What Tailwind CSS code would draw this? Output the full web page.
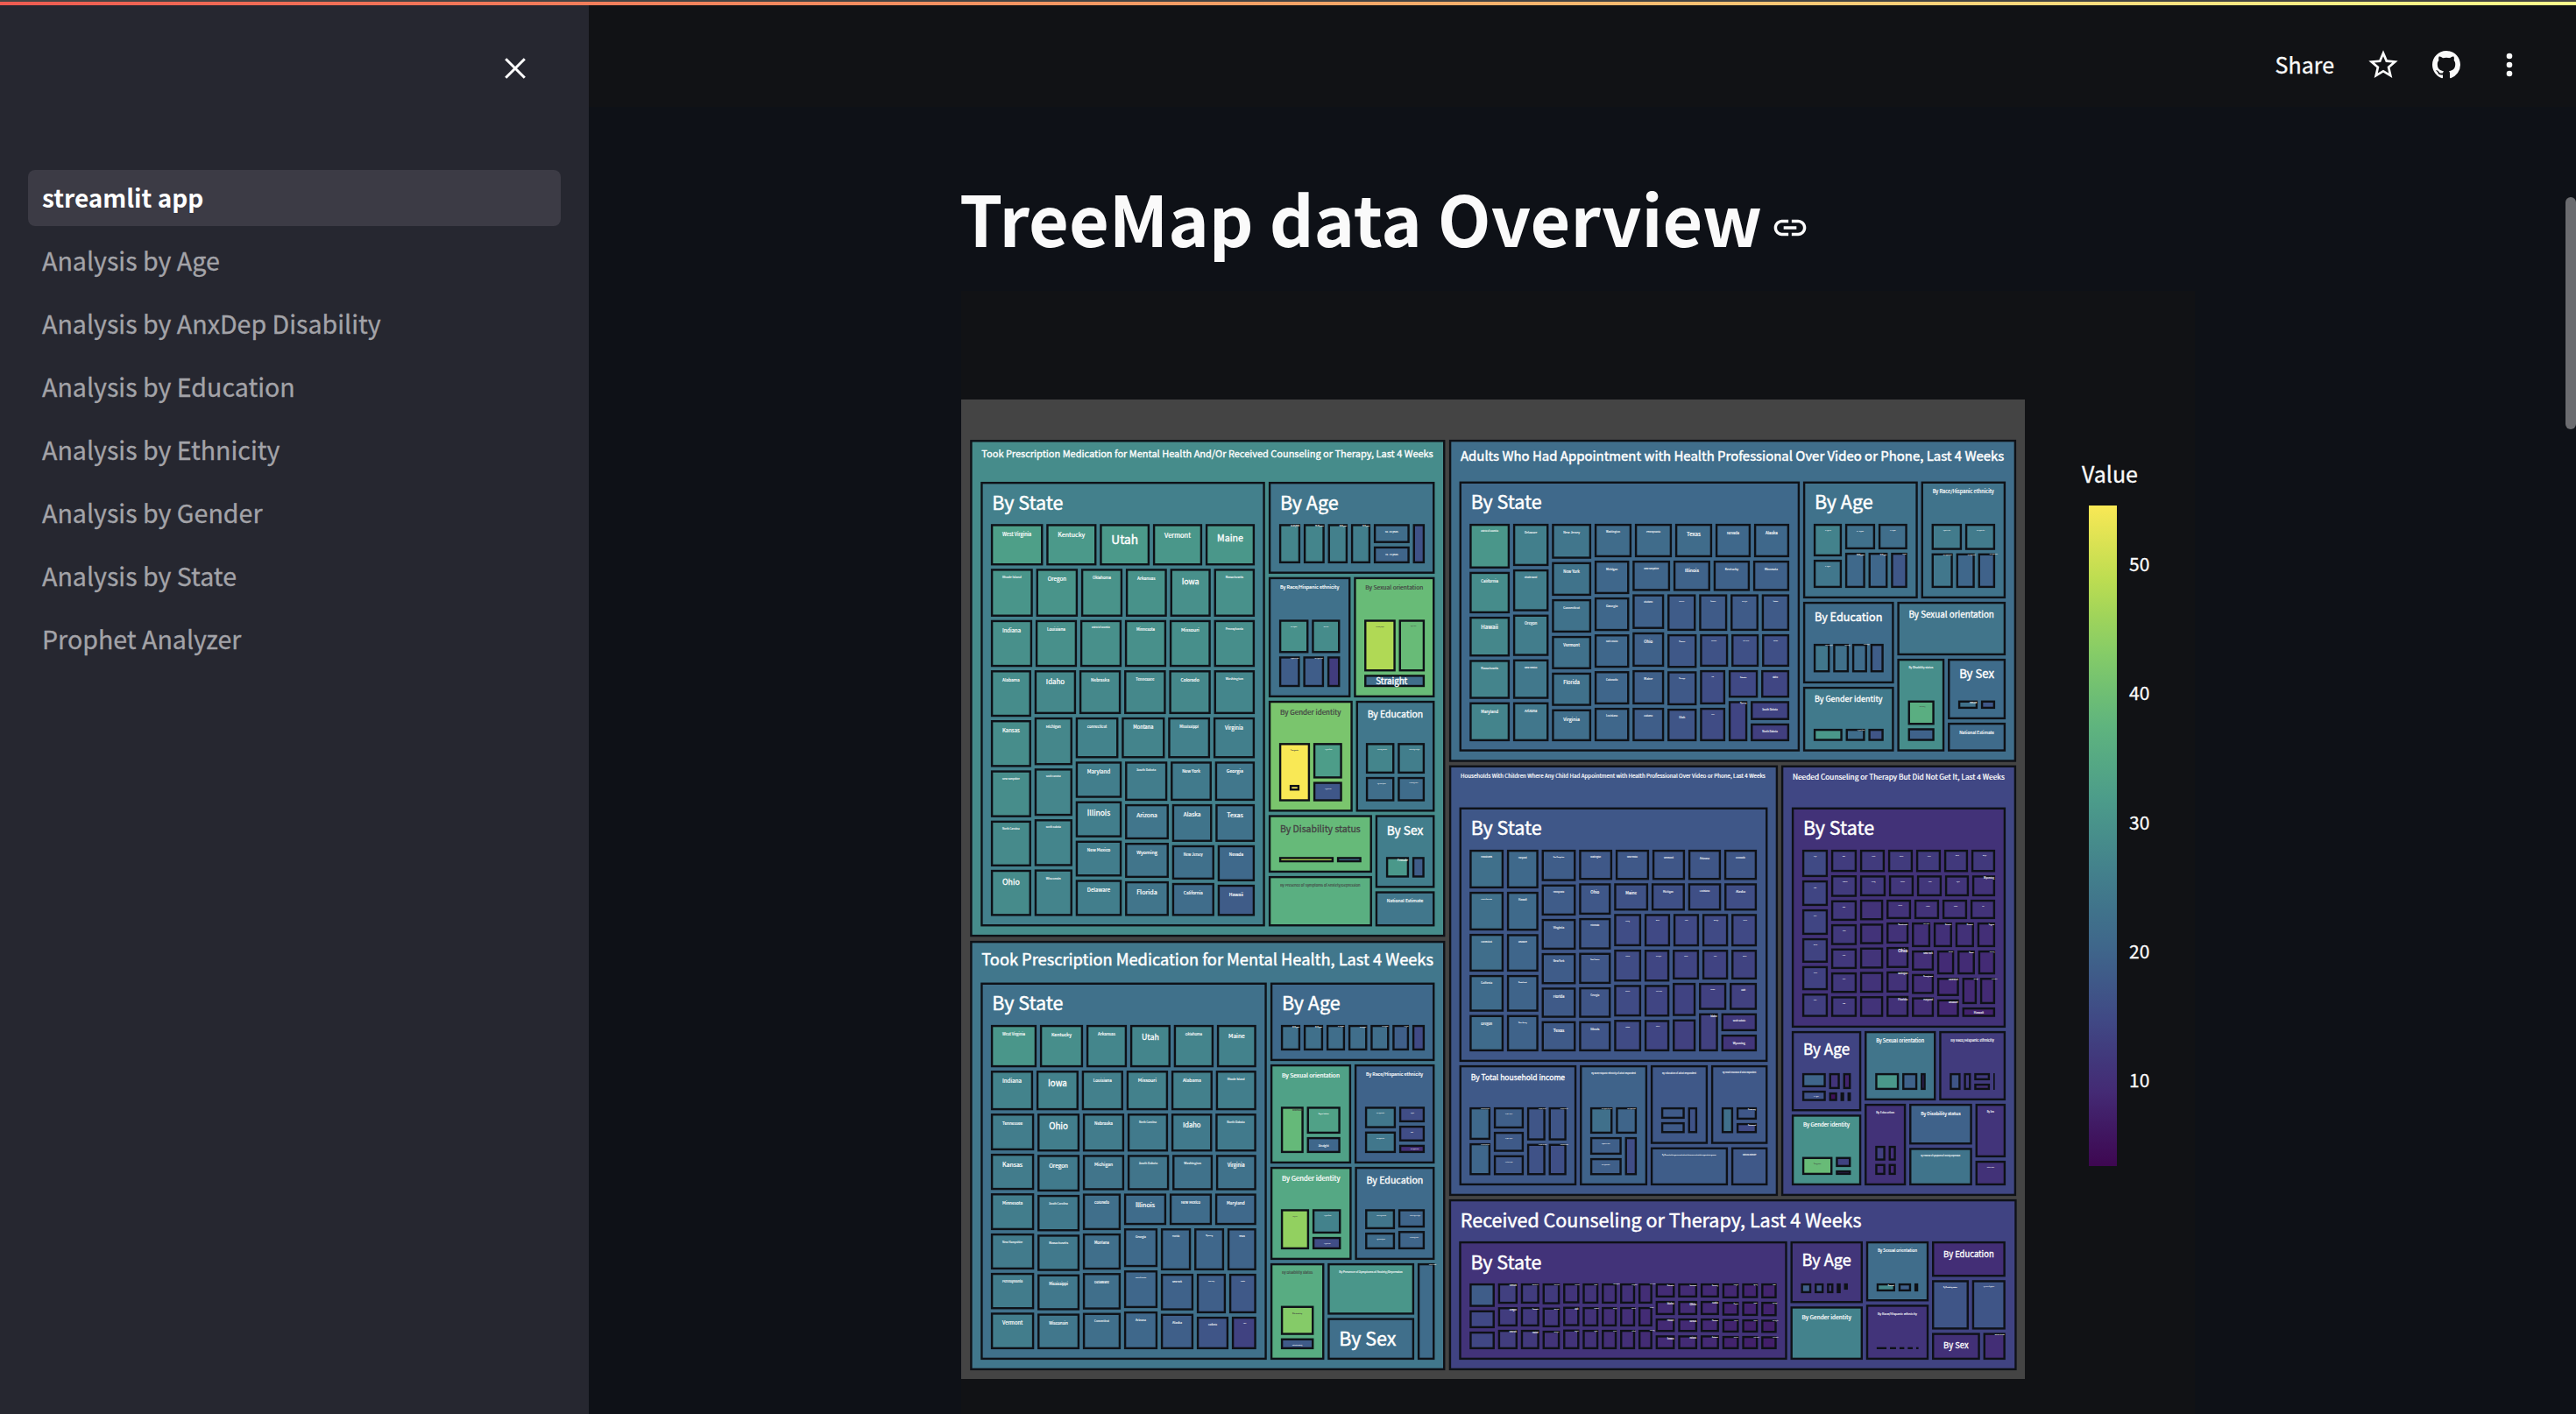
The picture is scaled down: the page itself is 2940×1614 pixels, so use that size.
<!DOCTYPE html>
<html lang="en">
<head>
<meta charset="utf-8">
<title>streamlit app</title>
<script src="https://cdn.jsdelivr.net/npm/@tailwindcss/browser@4"></script>
</head>
<body class="bg-[#0e1117] text-[#fafafa] w-[2940px] h-[1614px] overflow-hidden font-['Noto_Sans_CJK_SC','Noto_Sans',sans-serif]">
<div class="relative flex flex-col w-full h-full">
  <div class="h-[2px] shrink-0 bg-[#444444]"></div>
  <div class="h-1 shrink-0 bg-linear-to-r from-[#ed5b51] via-[#f6a266] to-[#feff8c]"></div>
  <div class="flex flex-1 min-h-0">
    <aside class="w-[672px] shrink-0 bg-[#262730] flex flex-col">
      <div class="h-[188px] pt-[58px] pl-[574px]">
        <svg class="w-7 h-7" viewBox="0 0 28 28" fill="none" stroke="#fff" stroke-width="3"><path d="M3.2 3.2 24.8 24.8M24.8 3.2 3.2 24.8"/></svg>
      </div>
      <nav class="flex flex-col gap-2 px-8 text-[28.6px] leading-[62px] text-[#a3a3a8] [-webkit-text-stroke:0.3px]">
        <a class="h-16 px-4 rounded-lg bg-[#3c3b45] text-white text-[28px] font-bold [-webkit-text-stroke:0px]">streamlit app</a>
        <a class="h-16 px-4">Analysis by Age</a>
        <a class="h-16 px-4">Analysis by AnxDep Disability</a>
        <a class="h-16 px-4">Analysis by Education</a>
        <a class="h-16 px-4">Analysis by Ethnicity</a>
        <a class="h-16 px-4">Analysis by Gender</a>
        <a class="h-16 px-4">Analysis by State</a>
        <a class="h-16 px-4">Prophet Analyzer</a>
      </nav>
    </aside>
    <main class="flex-1 flex flex-col">
      <header class="h-[116px] shrink-0 bg-[#111215] flex items-start justify-end pr-[60px]">
        <span class="text-[25px] leading-9 mt-[49px] mr-[36px] [-webkit-text-stroke:0.3px]">Share</span>
        <svg class="w-10 h-10 mt-[48px] mr-[36px]" viewBox="0 0 24 24" fill="#fafafa"><path d="M22 9.24l-7.19-.62L12 2 9.19 8.63 2 9.24l5.46 4.73L5.82 21 12 17.27 18.18 21l-1.63-7.03L22 9.24zM12 15.4l-3.76 2.27 1-4.28-3.32-2.88 4.38-.38L12 6.1l1.71 4.04 4.38.38-3.32 2.88 1 4.28L12 15.4z"/></svg>
        <svg class="w-8 h-8 mt-[52px] mr-[40px]" viewBox="0 0 16 16" fill="#fafafa"><path d="M8 0C3.58 0 0 3.58 0 8c0 3.54 2.29 6.53 5.47 7.59.4.07.55-.17.55-.38 0-.19-.01-.82-.01-1.49-2.01.37-2.53-.49-2.69-.94-.09-.23-.48-.94-.82-1.13-.28-.15-.68-.52-.01-.53.63-.01 1.08.58 1.23.82.72 1.21 1.87.87 2.33.66.07-.52.28-.87.51-1.07-1.78-.2-3.64-.89-3.64-3.95 0-.87.31-1.59.82-2.15-.08-.2-.36-1.02.08-2.12 0 0 .67-.21 2.2.82.64-.18 1.32-.27 2-.27s1.36.09 2 .27c1.53-1.04 2.2-.82 2.2-.82.44 1.1.16 1.92.08 2.12.51.56.82 1.27.82 2.15 0 3.07-1.87 3.75-3.65 3.95.29.25.54.73.54 1.48 0 1.07-.01 1.93-.01 2.2 0 .21.15.46.55.38A8.01 8.01 0 0 0 16 8c0-4.42-3.58-8-8-8z"/></svg>
        <svg class="w-8 h-8 mt-[52px]" viewBox="0 0 32 32" fill="#fafafa"><circle cx="16" cy="6" r="3.3"/><circle cx="16" cy="16" r="3.3"/><circle cx="16" cy="26" r="3.3"/></svg>
      </header>
      <div class="flex h-[210px] shrink-0 pl-[423px] pt-[61px]">
        <h1 class="text-[79px] leading-[130px] h-[130px] font-bold whitespace-nowrap">TreeMap data Overview</h1>
        <svg class="w-11 h-11 mt-[55px] ml-[10px]" viewBox="0 0 24 24" fill="#fafafa"><path d="M3.9 12c0-1.71 1.39-3.1 3.1-3.1h4V7H7c-2.76 0-5 2.24-5 5s2.24 5 5 5h4v-1.9H7c-1.71 0-3.1-1.39-3.1-3.1zM8 13h8v-2H8v2zm9-6h-4v1.9h4c1.71 0 3.1 1.39 3.1 3.1s-1.39 3.1-3.1 3.1h-4V17h4c2.76 0 5-2.24 5-5s-2.24-5-5-5z"/></svg>
      </div>
      <section class="ml-[425px] w-[1408px] flex-1 bg-[#111215]">
        <svg id="chart" class="block w-[1408px] h-[1282px]" viewBox="1097 332 1408 1282" fill="#fafafa"></svg>
      </section>
    </main>
  </div>
  <div class="absolute right-0 top-[225px] w-3 h-[265px] rounded-full bg-[#6b6c70]"></div>
</div>
<script>
const NS = 'http://www.w3.org/2000/svg', svg = document.getElementById('chart');
const VMIN = 3.35, VMAX = 54.5;
const VIRIDIS = ['440154','482878','3e4989','31688e','26828e','1f9e89','35b779','6ece58','b5de2b','fde725']
  .map(h => [0, 2, 4].map(i => parseInt(h.substr(i, 2), 16)));

// Viridis colour of a value, expressed in the wide-gamut display space
function tone(t) {
  t = Math.max(0, Math.min(1, t)) * 9;
  const i = Math.min(8, Math.floor(t)), f = t - i;
  const lin = VIRIDIS[i].map((c, k) => (c + (VIRIDIS[i + 1][k] - c) * f) / 255)
    .map(c => c <= .04045 ? c / 12.92 : ((c + .055) / 1.055) ** 2.4);
  const [r, g, b] = lin;
  return 'rgb(' + [.8225 * r + .1774 * g, .0332 * r + .9669 * g, .0171 * r + .0724 * g + .9108 * b]
    .map(c => Math.round(255 * (c <= .0031308 ? c * 12.92 : 1.055 * c ** (1 / 2.4) - .055))).join() + ')';
}
const color = v => tone((v - VMIN) / (VMAX - VMIN));

function el(name, attrs, text) {
  const e = document.createElementNS(NS, name);
  for (const k in attrs) e.setAttribute(k, attrs[k]);
  if (text) e.textContent = text;
  svg.appendChild(e);
  return e;
}

const widths = document.createElement('canvas').getContext('2d');
widths.font = '100px "Noto Sans CJK SC"';
const FMAX = 21.5;

function node(x0, y0, x1, y1, v, label) {
  const g = 2, x = x0 + g, y = y0 + g, w = x1 - x0 - 2 * g, h = y1 - y0 - 2 * g;
  if (w < 3.2 || h < 3.2) { el('rect', {x, y, width: w, height: h, fill: '#0e1117'}); return; }
  el('rect', {x: x + 1.1, y: y + 1.1, width: w - 2.2, height: h - 2.2, fill: color(v), stroke: '#0e1117', 'stroke-width': 2.4});
  if (!label) return;
  const em = widths.measureText(label).width / 100;
  let f, base;
  if (w > 26.6) { f = Math.min(FMAX, (w - 26) / em); base = y + 7 + f * 1.15; if (base > y + h - 2) { f = Math.min(f, h - 4); base = y + h / 2 + f * .38; } }
  else { f = (w - 14) / em; base = y + 1 + f * 1.1; }
  f = Math.max(f, 1);
  const ink = v > 35 ? '#444' : '#fff';
  el('text', {x: x + 13, y: base, 'font-size': f, fill: ink, stroke: ink, 'stroke-width': Math.min(.45, f * .03)}, label);
}

// A plot region: origin (ox, oy) and the number of layout units per pixel
const region = (ox, oy, sx, sy) => (x0, y0, x1, y1, v, label) =>
  node(ox + x0 / sx, oy + y0 / sy, ox + x1 / sx, oy + y1 / sy, v, label);

// Runs of tiles: R = row (top, bottom, x edges), C = column (left, right, y edges).
// vals is a list, or one number for the first tile with the rest in proportion to area.
function fill(draw, vals, names, runs) {
  const list = [];
  for (const [k, a, b, ...m] of runs)
    for (let i = 0; i + 1 < m.length; i++)
      list.push(k === 'R' ? [m[i], a, m[i + 1], b] : [a, m[i], b, m[i + 1]]);
  const area = r => (r[2] - r[0]) * (r[3] - r[1]);
  names = names ? names.split('|') : [];
  list.forEach((r, i) => draw(...r, Array.isArray(vals) ? vals[i] : vals * area(r) / area(list[0]), names[i]));
}

el('rect', {x: 1097, y: 456, width: 1214, height: 1118, fill: '#444444'});

// Took prescription medication and/or received counseling
node(1105.3, 500.2, 1651.3, 1071.2, 28.5, 'Took Prescription Medication for Mental Health And/Or Received Counseling or Therapy, Last 4 Weeks');
let d = region(1090, 450, 3, 2.529);
d(82, 248, 1067, 1541, 26, 'By State');
fill(d, 32.5, 'West Virginia|Kentucky|Utah|Vermont|Maine|Rhode Island|Oregon|Oklahoma|Arkansas|Iowa|Massachusetts|Indiana|Louisiana|District of Columbia|Minnesota|Missouri|Pennsylvania|Alabama|Kansas|New Hampshire|North Carolina|Ohio|Idaho|Nebraska|Tennessee|Colorado|Washington|Michigan|South Carolina|North Dakota|Wisconsin|Connecticut|Montana|Mississippi|Virginia|Maryland|Illinois|New Mexico|Delaware|South Dakota|New York|Georgia|Arizona|Wyoming|Florida|Alaska|Texas|New Jersey|California|Nevada|Hawaii', [
  ['R',370,499,117,307,490,672,852,1032], ['R',499,647,117,272,426,579,731,881,1032], ['R',647,792,117,270,423,576,729,881,1032],
  ['C',117,266.5,792,936,1081,1226,1368,1511], ['R',792,928,266.5,420,573.5,727.5,881,1032], ['C',266.5,407.5,928,1075.5,1222,1367,1511],
  ['R',928,1055.5,407.5,565,724,879,1032], ['C',407.5,576.5,1055.5,1170,1284,1397,1511], ['R',1055.5,1178.5,576.5,732.5,884.5,1032],
  ['C',576.5,737.5,1178.5,1290,1401,1511], ['R',1178.5,1297,737.5,886,1032], ['C',737.5,893.5,1297,1406,1511], ['C',893.5,1032,1297,1411,1511]]);
d = region(1430, 450, 3, 2.529);
d(48, 248, 628, 523, 23.7, 'By Age');
fill(d, [27,27,26,25.5,21.8,20,16.5], '18-29 years|30-39 years|40-49 years|50-59 years|60 - 69 years|70 - 79 years', [
  ['R',370,493,84,168,251,330,408], ['C',408,542,370,434.5,493], ['C',542,594,370,493]]);
d(48, 523, 340, 880, 22.7, 'By Race/Hispanic ethnicity');
fill(d, [29.5,28.5,18.5,18.5,12.5], 'Non-Hispanic|Two or more|Hispanic or Latino|Non-Hispanic black', [['R',646,752,84,196,304], ['R',752,850,84,166.5,249,304]]);
d(340, 523, 628, 880, 39, 'By Sexual orientation');
fill(d, [47.5,39,22], 'Bisexual people|Gay or lesbian|Straight', [['R',646,805,375.5,494,594], ['R',805,850,375.5,594]]);
d(48, 880, 347, 1210, 41.5, 'By Gender identity');
fill(d, [54.5,32,17.5,54.5], 'Transgender|Cis-gender female|Cis-gender male', [['C',84,201,1002,1180], ['C',201,311,1002,1114,1180], ['C',120,165,1123,1149]]);
d(347, 880, 628, 1210, 24, 'By Education');
fill(d, [27,25.5,22,21.5], 'Some college/associate|Bachelor degree or higher|High school diploma|Less than high school', [['R',1002,1100,381,490,594], ['R',1100,1180,381,490,594]]);
d(48, 1210, 413.5, 1386, 38.7, 'By Disability status');
fill(d, [48,22], '', [['R',1331,1356,84,282,377]]);
d(48, 1386, 413.5, 1541, 36.2, 'By Presence of Symptoms of Anxiety/Depression');
d(413.5, 1210, 628, 1430, 25.5, 'By Sex');
fill(d, [31,18.5], 'Female', [['R',1331,1400,450,540,593]]);
d(413.5, 1430, 628, 1541, 24, 'National Estimate');

// Took prescription medication
node(1105.3, 1072, 1651.3, 1566, 24, 'Took Prescription Medication for Mental Health, Last 4 Weeks');
d = region(1090, 1065, 3, 3);
d(82, 164, 1073, 1467, 22.7, 'By State');
fill(d, 30.5, 'West Virginia|Kentucky|Arkansas|Utah|Oklahoma|Maine|Indiana|Iowa|Louisiana|Missouri|Alabama|Rhode Island|Tennessee|Kansas|Minnesota|New Hampshire|Pennsylvania|Vermont|Ohio|Oregon|South Carolina|Massachusetts|Mississippi|Wisconsin|Nebraska|North Carolina|Idaho|North Dakota|Michigan|South Dakota|Washington|Virginia|Colorado|Montana|Delaware|Connecticut|Illinois|New Mexico|Maryland|Georgia|District of Columbia|Arizona|Florida|Wyoming|Texas|New York|Alaska|New Jersey|Nevada|California|Hawaii', [
  ['R',309,465.5,117,285,444,594,743.5,891,1037], ['R',465.5,612.5,117,273,428.5,581.5,735,887.5,1037],
  ['C',117,276.5,612.5,750,885.5,1023,1158,1294,1431], ['C',276.5,432,612.5,754,891,1027,1163,1297.5,1431],
  ['R',612.5,754,432,585,735,886,1037], ['R',754,886.5,432,585,738.5,888,1037], ['C',432,573,886.5,1023,1158.5,1295,1431],
  ['R',886.5,1005.5,573,729,885,1037], ['C',573,699,1005.5,1149.5,1290,1431], ['R',1005.5,1161,699,813.5,927,1037],
  ['C',699,822,1161,1298,1431], ['R',1161,1308,822,933,1037], ['R',1308,1431,822,942,1037]]);
d = region(1430, 1065, 3, 3);
d(54, 164, 628, 444, 21, 'By Age');
fill(d, [22.5,22.5,22,22,22,19,15], '50-59 years|60-69 years|40-49 years|30-39 years|18-29 years|70-79 years', [['R',309,408,90,168,246,321,397,472,540,594]]);
d(54, 444, 342, 795, 33, 'By Sexual orientation');
fill(d, [38.5,33,20.5], 'Bisexual|Gay or lesbian|Straight', [['C',90,179,589,759], ['C',179,305,589,693,759]]);
d(342, 444, 628, 795, 19.7, 'By Race/Hispanic ethnicity');
fill(d, [24,24,15.5,15.5,10], 'Non-Hispanic white|Non-Hispanic other|Hispanic|Black|Non-Hispanic Asian', [['C',378,495,589,674,759], ['C',495,594,589,654,719.5,759]]);
d(54, 795, 343.5, 1125, 34.5, 'By Gender identity');
fill(d, [44.5,26.5,15.5], 'Transgender|Cis-gender female|Cis-gender male', [['C',90,198,940,1089], ['C',198,307,940,1035,1089]]);
d(343.5, 795, 628, 1125, 21.3, 'By Education');
fill(d, [23.5,21.5,20,20], 'Some college/Associate|High school diploma|Bachelor degree or higher|Less than high school', [['C',378.5,492,940,1020,1089], ['C',492,594,940,1014.5,1089]]);
d(54, 1125, 250, 1467, 35.5, 'By Disability status');
fill(d, [43,18], 'With disability|Without disability', [['C',90,214,1271,1382,1431]]);
d(250, 1125, 558, 1312.5, 30.5, 'By Presence of Symptoms of Anxiety/Depression');
d(250, 1312.5, 558, 1467, 22.3, 'By Sex');
d(558, 1125, 628, 1467, 21.5, 'National Estimate');

// Adults: telehealth appointment
node(1652, 500, 2303, 871.6, 22, 'Adults Who Had Appointment with Health Professional Over Video or Phone, Last 4 Weeks');
d = region(1645, 450, 3, 3);
d(56, 293, 1233, 1229, 21, 'By State');
fill(d, 30.5, 'District of Columbia|California|Hawaii|Massachusetts|Maryland|Delaware|Rhode Island|Oregon|New Mexico|Arizona|New Jersey|New York|Connecticut|Vermont|Florida|Virginia|Washington|Pennsylvania|Texas|Nevada|Alaska|Michigan|Georgia|North Carolina|Colorado|Louisiana|New Hampshire|Illinois|Kentucky|Minnesota|Oklahoma|Ohio|Maine|Alabama|Tennessee|Arkansas|West Virginia|Indiana|Missouri|Mississippi|Utah|Wisconsin|South Carolina|Montana|Iowa|Kansas|Nebraska|Idaho|Wyoming|South Dakota|North Dakota', [
  ['C',91,240,438,602.5,756,904,1049,1194], ['C',240,373,438,594,749,902,1049,1194], ['C',373,519,438,569,696,822,947.5,1073,1194],
  ['R',438,564,519,657,795,933,1065,1197], ['C',519,649,564,690,816.5,942.5,1068,1194], ['R',564,679.5,649,789,926.5,1062,1197],
  ['C',649,768.5,679.5,809.5,939,1068,1194], ['R',679.5,816,768.5,877,984.5,1091.5,1197], ['C',768.5,880,816,943,1071,1194],
  ['R',816,939,880,987.5,1092.5,1197], ['C',880,978,939,1068,1194], ['R',939,1045,978,1089.5,1197], ['C',978,1053.5,1045,1194],
  ['C',1053.5,1197,1045,1121.5,1194]]);
d = region(2045, 450, 3, 3);
d(33, 293, 437, 705, 23, 'By Age');
fill(d, [26.5,24,22.5,22,21,20.5,17.5], '18-29 years old|30 - 39 years|40 - 49 years|50 - 59 years|60-69 years|70-79 years|80 years', [['C',69,177,438,561,669], ['R',438,537,177,291,401], ['R',537,669,177,257,334,401]]);
d(437, 293, 738, 705, 23.2, 'By Race/Hispanic ethnicity');
fill(d, [25,25,24,20.5,19.5], 'Hispanic or Latino|Non-Hispanic other|Non-Hispanic black|Non-Hispanic white|Non-Hispanic Asian', [['R',438,539,473,588,702], ['R',539,669,473,557,632,702]]);
d(33, 705, 355.5, 996, 21.5, 'By Education');
fill(d, [24,22.5,21.5,18.5], 'Bachelor or higher|Some college|Less than high', [['R',849,958,69,136,201,263.5,320]]);
d(33, 996, 355.5, 1229, 24.7, 'By Gender identity');
fill(d, [31,21.5,17], '|Cis-gender female', [['R',1140,1193,69,179,256.5,320]]);
d(355.5, 705, 738, 900, 23.5, 'By Sexual orientation');
d(355.5, 900, 528.5, 1229, 29, 'By Disability status');
fill(d, [36,19.5], 'With disability', [['C',392,494,1043,1138,1193]]);
d(528.5, 900, 738, 1119, 21.5, 'By Sex');
fill(d, [22.7,17.5], 'Female', [['R',1043,1083,564,642,702]]);
d(528.5, 1119, 738, 1229, 21.3, 'National Estimate');

// Households with children: telehealth appointment
d = region(1645, 865, 3, 3);
d(21, 20, 1158, 1506, 17.5, 'Households With Children Where Any Child Had Appointment with Health Professional Over Video or Phone, Last 4 Weeks');
d(56, 164, 1123, 1047, 17.5, 'By State');
fill(d, 22.5, 'Massachusetts|District of Columbia|Connecticut|California|Oregon|Maryland|Hawaii|Delaware|Rhode Island|New Jersey|New Hampshire|Pennsylvania|Virginia|New York|Florida|Texas|Washington|New Mexico|Vermont|Arizona|Colorado|Ohio|Minnesota|North Carolina|Georgia|Illinois|Maine|Michigan|Louisiana|Alaska|Kentucky|Oklahoma|Wisconsin|Indiana|Missouri|Nevada|Mississippi|Tennessee|West Virginia|South Carolina|Arkansas|Alabama|Kansas|Montana|||Nebraska|Utah|Idaho|South Dakota|Wyoming', [
  ['C',91,219,309,453,597,738,875,1011], ['C',219,338,309,453,598,738,875,1011], ['C',338,466,309,428,546,663,781,896,1011],
  ['R',309,424,466,591,717,840,963,1086], ['C',466,586,424,543,662,780,896,1011], ['R',424,529,586,714,839.5,963.5,1086],
  ['C',586,690,529,651,772,891.5,1011], ['R',529,651.5,690,789,888,987.5,1086], ['C',690,786.5,651.5,772,892,1011],
  ['R',651.5,765,786.5,888,987.5,1086], ['C',786.5,876.5,765,890,1011], ['R',765,869,876.5,981.5,1086], ['C',876.5,953,869,1011],
  ['C',953,1086,869,942,1011]]);
d(56, 1047, 468.5, 1470, 17.8, 'By Total household income');
fill(d, [21,20.5,19,18,17.5,17,16.5,17,16], '$50,000-$74,999|$25,000-$34,999|$35,000 - $49,999|$75,000 - $99,999|Less than $25,000|$100,000-$149,999|$150,000 and above|$150,000-$199,999|$200,000 and above', [
  ['C',91,174,1191,1314,1435], ['C',174,288,1191,1275,1355,1435], ['C',288,362,1191,1316,1435], ['C',362,434,1191,1316,1435]]);
d(468.5, 1047, 711, 1470, 19.7, 'By Race/Hispanic ethnicity of adult respondent');
fill(d, [22.5,20,19,19,15.5], 'Non-Hispanic other races|Non-Hispanic black|Hispanic or Latino|Non-Hispanic white', [['R',1191,1293,504,592,675], ['C',504,623,1293,1365,1435], ['C',623,675,1293,1435]]);
d(711, 1047, 918, 1328, 17.7, 'By Education of adult respondent');
fill(d, [18,18,16.5], '', [['C',747,839,1191,1242,1291], ['C',839,882,1191,1291]]);
d(918, 1047, 1123, 1328, 17.7, 'By Health insurance of adult respondent');
fill(d, [22.5,17.5,15], '|Private only|Not insured', [['C',954,1005,1191,1291], ['C',1005,1086,1191,1245,1291]]);
d(711, 1328, 987, 1470, 18.5, 'By Household experienced school closures and adult respondent spouse');
d(987, 1328, 1123, 1470, 17.7, 'National Estimate');

// Needed counseling but did not get it
d = region(2025, 865, 3, 3);
d(18, 20, 834, 1506, 14.5, 'Needed Counseling or Therapy But Did Not Get It, Last 4 Weeks');
d(54, 164, 798, 930, 10.6, 'By State');
fill(d, 15, 'Oregon|Utah|District|Montana|Vermont|Kansas|Maine|New Mexico|Idaho|Indiana|Alaska|Illinois|Iowa|Colorado|Arkansas|Arizona|Missouri|Michigan|Kentucky|Oklahoma|Nevada|Virginia|Wyoming||||||Tennessee|Louisiana|Alabama|Texas|Massachusetts|Ohio|Washington|Florida|North Carolina|Nebraska|Wisconsin|Virginia|New York|Pennsylvania|Maryland|Missouri|Hawaii|New Jersey|Connecticut|Delaware|Mississippi|South Dakota|Hawaii', [
  ['C',90,189,309,414,513,612,707.5,801.5,893], ['C',189,288,309,396.5,482,564,647,729,811,893], ['R',309,397,288,384,480,576,669,762],
  ['R',397,480,288,387,483,579,672,762], ['C',288,378.5,480,562,644,727.5,810.5,893], ['R',480,558,378.5,474,570,666,762],
  ['C',378.5,465.5,558,642,725.5,809.5,893], ['R',558,654,465.5,540,614.5,689.5,762], ['C',465.5,552,654,734.5,814.5,893],
  ['R',654,747.5,552,621.5,692.5,762], ['C',552,638,747.5,821.5,893], ['R',747.5,849,638,699,762], ['R',849,893,638,762]]);
d(54, 930, 303.5, 1216, 13.8, 'By Age');
fill(d, [20,16.5,11,8,5,4,3.5], '|30 - 39 years', [['C',90,182,1074,1134,1181], ['R',1074,1140,182,230,268], ['R',1140,1181,182,221,245,268]]);
d(54, 1216, 303.5, 1470, 29.5, 'By Gender identity');
fill(d, [39,13.5,8], 'Transgender', [['C',90,205,1361,1434], ['C',205,268,1361,1407,1434]]);
d(303.5, 930, 559, 1179, 23.5, 'By Sexual orientation');
fill(d, [31,19.5,9], '', [['R',1074,1143,340,432.5,495.5,524]]);
d(559, 930, 798, 1179, 12.3, 'By Race/Hispanic ethnicity');
fill(d, [17,12.5,12,10,9], '', [['R',1074,1143,595,643.5,679], ['C',679,744,1074,1110,1143], ['C',744,761,1074,1143]]);
d(303.5, 1179, 456.5, 1470, 10.6, 'By Education');
fill(d, [13,10,10,9], '', [['R',1323,1385,340,386,422], ['R',1385,1434,340,386,422]]);
d(456.5, 1179, 683, 1330, 19.5, 'By Disability status');
d(456.5, 1330, 683, 1470, 23.3, 'By Presence of Symptoms of Anxiety/Depression');
d(683, 1179, 798, 1374, 11, 'By Sex');
d(683, 1374, 798, 1470, 10.6, 'National Estimate');

// Received counseling
d = region(1645, 1360, 2.34, 3);
d(16, 21, 1541, 618, 13.7, 'Received Counseling or Therapy, Last 4 Weeks');
d(43, 165, 928, 582, 10.8, 'By State');
fill(d, 18.5, '|||Vermont|Oregon|New York|Massachusetts|Colorado|Maine|Rhode Island|Minnesota|Washington|Connecticut|Utah|Maryland|Illinois|New Mexico|Virginia|New Hampshire|Michigan|Arizona|Pennsylvania|Wisconsin|California|North Carolina|Delaware|New Jersey|Nebraska|Idaho|Missouri|Iowa|Louisiana|Ohio|Kansas|Indiana|Kentucky|Alaska|Montana|Alabama|Georgia|Florida|Tennessee|Oklahoma|Wyoming|Nevada|Arkansas|South Dakota|Texas|Mississippi|West Virginia|South Dakota|Hawaii', [
  ['C',71,147,309,401,474,546], ['C',147,208,309,390.5,468,546], ['C',208,266,309,390,468,546], ['C',266,321,309,392,471,546],
  ['C',321,373,309,389,467,546], ['C',373,424,309,390,468,546], ['C',424,473,309,390,468,546], ['C',473,522,309,390,468,546],
  ['C',522,568,309,390,468,546], ['C',568,628,309,369,429,487,546], ['C',628,688,309,369,429,487,546], ['C',688,746,309,369,429,487,546],
  ['C',746,799,309,372,431,489,546], ['C',799,850,309,371,432,489,546], ['C',850,900,309,372,433,490,546]]);
d(928, 165, 1130, 388, 11.3, 'By Age');
fill(d, [19,17,12,9,5], '', [['R',309,354,956,992.5,1025.5,1051.5,1071], ['R',309,342,1071,1090]]);
d(928, 388, 1130, 582, 26.5, 'By Gender identity');
d(1130, 165, 1306, 382, 21.8, 'By Sexual orientation');
fill(d, [28,19,8], 'Bisexual', [['R',309,348,1158,1216.5,1259,1278]]);
d(1130, 382, 1306, 582, 11, 'By Race/Hispanic ethnicity');
fill(d, [8,8,8,8,8], '', [['R',527,546,1158,1193.5,1219,1241,1263.5,1279]]);
d(1306, 165, 1511, 298, 9.8, 'By Education');
d(1306, 298, 1413, 478.5, 17, 'By Disability status');
d(1413, 298, 1511, 478.5, 17, 'By Presence of Symptoms');
d(1306, 478.5, 1443, 582, 10.3, 'By Sex');
d(1443, 478.5, 1511, 582, 9.8, 'National Estimate');

// Colour bar
const defs = el('defs', {}), grad = document.createElementNS(NS, 'linearGradient');
grad.id = 'scale'; grad.setAttribute('x2', 0); grad.setAttribute('y2', 1);
for (let i = 0; i <= 18; i++) {
  const s = document.createElementNS(NS, 'stop');
  s.setAttribute('offset', i / 18); s.setAttribute('stop-color', tone(1 - i / 18)); grad.appendChild(s);
}
defs.appendChild(grad);
el('rect', {x: 2384, y: 577, width: 32, height: 754, fill: 'url(#scale)'});
el('text', {x: 2376, y: 551, 'font-size': 25, fill: '#fafafa', stroke: '#fafafa', 'stroke-width': .3}, 'Value');
for (const v of [50, 40, 30, 20, 10])
  el('text', {x: 2430, y: 652 + (50 - v) * 14.73, 'font-size': 21, fill: '#fafafa', stroke: '#fafafa', 'stroke-width': .3}, String(v));
</script>
</body>
</html>
